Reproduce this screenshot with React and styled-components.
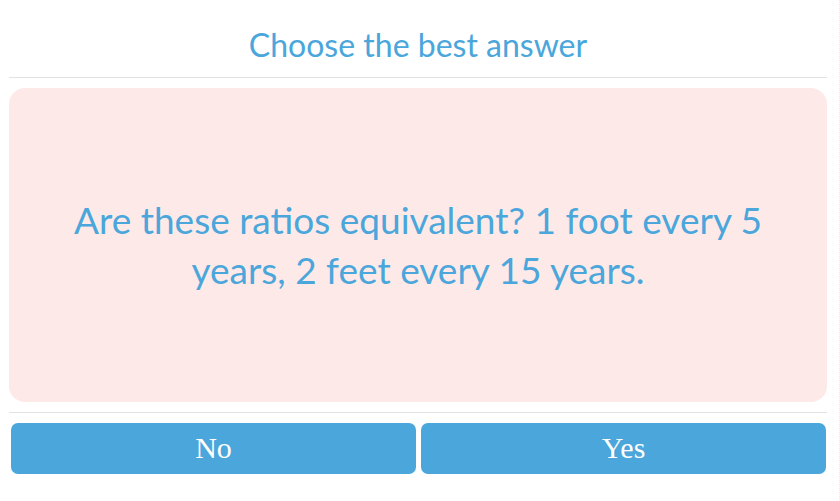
import React from 'react';
import styled, { createGlobalStyle } from 'styled-components';

const GlobalStyle = createGlobalStyle`
  html, body {
    margin: 0;
    padding: 0;
    background: #ffffff;
  }
`;

const Page = styled.div`
  box-sizing: border-box;
  width: 840px;
  height: 501px;
  padding: 0 12px 0 9px;
  display: flex;
  flex-direction: column;
  border-right: 1px dotted #f8e4e4;
  font-family: Lato, "Noto Sans", sans-serif;
`;

const Header = styled.div`
  height: 78px;
  display: flex;
  align-items: center;
  justify-content: center;
  border-bottom: 1px solid #e2e2e2;
  color: #4aa6db;
  font-size: 32px;
  padding-top: 12px;
  box-sizing: border-box;
`;

const Card = styled.div`
  margin-top: 10px;
  height: 314px;
  background: #fdeae8;
  border-radius: 16px;
  display: flex;
  align-items: center;
  justify-content: center;
  padding: 0 50px;
  box-sizing: border-box;
`;

const Question = styled.p`
  margin: 0;
  text-align: center;
  color: #4aa6db;
  font-size: 37px;
  line-height: 50px;
`;

const Footer = styled.div`
  margin-top: 10px;
  border-top: 1px solid #e2e2e2;
  padding: 10px 1px 0 2px;
  display: flex;
  gap: 5px;
`;

const Choice = styled.button`
  flex: 1;
  height: 51px;
  border: none;
  border-radius: 7px;
  background: #4aa6db;
  color: #ffffff;
  font-family: "Liberation Serif", "Times New Roman", serif;
  font-size: 30px;
  padding: 0 0 2px;
  cursor: pointer;
`;

export default function App() {
  return (
    <>
      <GlobalStyle />
      <Page>
        <Header>Choose the best answer</Header>
        <Card>
          <Question>
            Are these ratios equivalent? 1 foot every 5 years, 2 feet every 15 years.
          </Question>
        </Card>
        <Footer>
          <Choice>No</Choice>
          <Choice>Yes</Choice>
        </Footer>
      </Page>
    </>
  );
}
